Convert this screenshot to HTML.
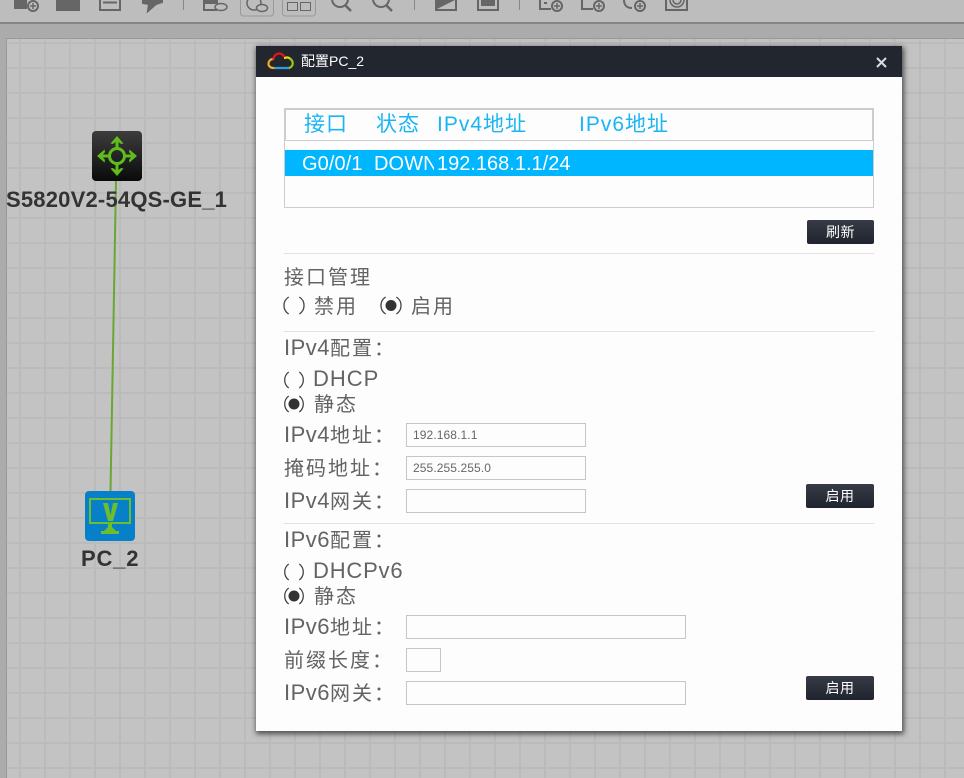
<!DOCTYPE html>
<html><head><meta charset="utf-8">
<style>
html,body{margin:0;padding:0}
body{width:964px;height:778px;overflow:hidden;position:relative;background:#ababab;font-family:"Liberation Sans","Noto Sans CJK SC",sans-serif}
.abs,.t{position:absolute}
.t{white-space:nowrap;color:#636363;font-size:20px;line-height:24px;letter-spacing:2px}
.t b{font-weight:normal;font-size:22px;letter-spacing:.5px}
.hd{color:#1ab5f5;font-size:21px;letter-spacing:1px}
.inp{position:absolute;box-sizing:border-box;height:24px;border:1px solid #c6c6c6;background:#fdfdfd;font-size:12px;color:#666;line-height:22px;padding-left:6px;letter-spacing:.1px}
.btn{position:absolute;width:67px;height:24px;border-radius:2px;background:linear-gradient(#363b47,#20242d);color:#fff;font-size:14px;line-height:24px;text-align:center;letter-spacing:.5px}
.hr{position:absolute;left:284px;width:590px;height:1px;background:#e2e2e2}
</style></head><body>
<div class="abs" style="left:0;top:0;width:964px;height:22px;background:#bdbdbd;border-bottom:2px solid #868686"></div>
<svg class="abs" style="left:6px;top:38px" width="958" height="740">
<defs><pattern id="g" width="25" height="25" patternUnits="userSpaceOnUse" x="13" y="4"><path d="M0 0h25v25h-25z" fill="#c3c3c3"/><path d="M0 0h25v2h-25z" fill="#bbb"/><path d="M0 0h2v25h-2z" fill="#bbb"/></pattern></defs>
<rect width="958" height="740" fill="url(#g)"/>
<rect x="0" y="0" width="958" height="1" fill="#999"/><rect x="0" y="0" width="1" height="740" fill="#999"/>
</svg>
<svg class="abs" style="left:0;top:0" width="964" height="24" fill="none" stroke="#666" stroke-width="2">
<path d="M14 0h13v9h-13z" fill="#666" stroke="none"/><circle cx="33" cy="6" r="5" fill="#bdbdbd"/><path d="M30 6h6M33 3v6" stroke-width="1.500"/>
<path d="M56 0h24v11h-24z" fill="#666" stroke="none"/>
<path d="M100 0v10h20v-10M103 2.500h14"/>
<path d="M143 0v3l6 1-1 7 8-7 6-2v-2z" fill="#666"/>
<path d="M183.500 0v10" stroke="#888" stroke-width="1"/>
<path d="M204 0v10h13"/><path d="M205 0h13v4h-13z" fill="#666" stroke="none"/><ellipse cx="221" cy="7" rx="6" ry="3.500" fill="#bdbdbd" stroke-width="1.500"/>
<rect x="240.500" y="-5" width="33" height="21" rx="3" stroke="#999" stroke-width="1"/><circle cx="254" cy="3" r="7" stroke-width="1.500"/><ellipse cx="262" cy="8" rx="5.500" ry="3.500" fill="#bdbdbd" stroke-width="1.500"/>
<rect x="282.500" y="-5" width="33" height="21" rx="3" stroke="#999" stroke-width="1"/><path d="M287.500 2.500h10v8h-10zM300.500 2.500h10v8h-10z" stroke-width="1"/>
<circle cx="340" cy="-1" r="8"/><path d="M345 5l6 6" stroke-width="2.500"/>
<circle cx="381" cy="-1" r="8"/><path d="M386 5l6 6" stroke-width="2.500"/>
<path d="M414.500 0v10" stroke="#888" stroke-width="1"/>
<path d="M436 0v10h20v-10"/><path d="M437 0h18l-18 9z" fill="#666" stroke="none"/>
<path d="M478 0v10h20v-10"/><path d="M481 0h14v6h-14z" fill="#666" stroke="none"/>
<path d="M519.500 0v10" stroke="#888" stroke-width="1"/>
<path d="M540 0v9h11M544 3h3"/><circle cx="557" cy="6" r="5" fill="#bdbdbd"/><path d="M554 6h6M557 3v6" stroke-width="1.500"/>
<path d="M582 0v9h11"/><circle cx="599" cy="6" r="5" fill="#bdbdbd"/><path d="M596 6h6M599 3v6" stroke-width="1.500"/>
<path d="M624 0c0 5 3 8 8 8"/><circle cx="640" cy="6" r="5" fill="#bdbdbd"/><path d="M637 6h6M640 3v6" stroke-width="1.500"/>
<path d="M666 0v10h21v-10"/><path d="M670 0a7 7 0 0 0 14 0M673 0a4 4 0 0 0 8 0" stroke-width="1.500"/>
</svg>
<svg class="abs" style="left:0;top:0" width="256" height="778" fill="none">
<path d="M116 180L110.500 492" stroke="#6aa632" stroke-width="2"/>
<defs><linearGradient id="b" x1="0" y1="0" x2="0" y2="1"><stop offset="0" stop-color="#3d3d3d"/><stop offset="1" stop-color="#0a0a0a"/></linearGradient>
<path id="ar" d="M117 136l6.500 7.500-2.500.5-2.500-2v7h-3v-7l-2.500 2-2.500-.5z" fill="#5fbd1c"/></defs>
<rect x="92" y="131" width="50" height="50" rx="4" fill="url(#b)"/>
<circle cx="117" cy="156" r="7.500" stroke="#5fbd1c" stroke-width="3"/>
<use href="#ar"/><use href="#ar" transform="rotate(90 117 156)"/><use href="#ar" transform="rotate(180 117 156)"/><use href="#ar" transform="rotate(270 117 156)"/>
<rect x="85" y="491" width="50" height="50" rx="4" fill="#0681c9"/>
<rect x="90" y="499" width="40" height="24" stroke="#6dbd2c" stroke-width="2"/>
<path d="M103 503h5l2.500 12 2.500-12h5l-5 18h-5z" fill="#6dbd2c"/>
<path d="M108 524h4v3h-4zM104 531l4-4h4l4 4zM101 531h18v3h-18z" fill="#6dbd2c"/>
</svg>
<div class="t" style="left:6px;top:187px;font-size:22px;line-height:26px;font-weight:bold;color:#333;letter-spacing:.2px">S5820V2-54QS-GE_1</div>
<div class="t" style="left:81px;top:546px;font-size:22px;line-height:26px;font-weight:bold;color:#333;letter-spacing:.8px">PC_2</div>

<div class="abs" style="left:256px;top:46px;width:646px;height:685px;background:#fdfdfd;box-shadow:1px 2px 5px 1px rgba(40,40,40,.75)"></div>
<div class="abs" style="left:256px;top:46px;width:646px;height:31px;background:#22262f"></div>
<svg class="abs" style="left:266px;top:51px" width="30" height="20" fill="none" stroke-width="2.200" stroke-linecap="round">
<path d="M2.500 13c0-3 2-5 5-5" stroke="#eeb01c"/><path d="M7.500 8c0-3 3-5.500 5.500-5.500 3 0 5 2 6 4.500" stroke="#e8141c"/><path d="M19 7c2-1 4-.5 5.500 1" stroke="#f4e000"/><path d="M24.500 8c2.500 2 3 5 1 7.500-1 1-2 1.500-3 1.500" stroke="#9bc41c"/><path d="M9 17h13" stroke="#2c9fdc"/><path d="M2.500 13c0 2.500 2.500 4 5 4" stroke="#eeb01c"/></svg>
<div class="t" style="left:301px;top:51px;font-size:14px;line-height:20px;color:#fff;letter-spacing:0">配置PC_2</div>
<svg class="abs" style="left:875px;top:56px" width="13" height="13"><path d="M2 2l9 9M11 2l-9 9" stroke="#dcdcdc" stroke-width="2"/></svg>

<div class="abs" style="left:284px;top:108px;width:590px;height:100px;box-sizing:border-box;border:1px solid #ccc;background:#fdfdfd"></div>
<div class="abs" style="left:284px;top:108px;width:590px;height:33px;box-sizing:border-box;border:2px solid #ccc;border-bottom:1px solid #ccc"></div>
<div class="abs" style="left:285px;top:150px;width:588px;height:26px;background:#00b6ff"></div>
<div class="t hd" style="left:304px;top:113px">接口</div>
<div class="t hd" style="left:376px;top:113px">状态</div>
<div class="t hd" style="left:437px;top:113px">IPv4地址</div>
<div class="t hd" style="left:579px;top:113px">IPv6地址</div>
<div class="t" style="left:302px;top:152px;color:#fff;letter-spacing:.1px">G0/0/1</div>
<div class="t" style="left:374px;top:152px;color:#fff;letter-spacing:.1px;width:60px;overflow:hidden">DOWN</div>
<div class="t" style="left:437px;top:152px;color:#fff;letter-spacing:0">192.168.1.1/24</div>
<div class="btn" style="left:807px;top:220px">刷新</div>
<div class="hr" style="top:253px"></div>

<svg class="abs" style="left:0;top:0;pointer-events:none" width="964" height="778" fill="none" stroke="#444" stroke-width="1.300">
<path d="M288.700 297A10 10 0 0 0 288.700 314M299.300 297A10 10 0 0 1 299.300 314"/>
<path d="M385.700 297A10 10 0 0 0 385.700 314M396.300 297A10 10 0 0 1 396.300 314"/><circle cx="391" cy="305.500" r="5.500" fill="#333" stroke="none"/>
<path d="M288.700 372A10 10 0 0 0 288.700 388M299.300 372A10 10 0 0 1 299.300 388"/>
<path d="M288.700 396A10 10 0 0 0 288.700 412M299.300 396A10 10 0 0 1 299.300 412"/><circle cx="294" cy="404" r="5.500" fill="#333" stroke="none"/>
<path d="M288.700 564A10 10 0 0 0 288.700 580M299.300 564A10 10 0 0 1 299.300 580"/>
<path d="M288.700 588A10 10 0 0 0 288.700 604M299.300 588A10 10 0 0 1 299.300 604"/><circle cx="294" cy="596" r="5.500" fill="#333" stroke="none"/>
</svg>

<div class="t" style="left:284px;top:266px">接口管理</div>
<div class="t" style="left:314px;top:295px">禁用</div>
<div class="t" style="left:411px;top:295px">启用</div>
<div class="hr" style="top:331px"></div>

<div class="t" style="left:284px;top:336px"><b>IPv4</b>配置：</div>
<div class="t" style="left:313px;top:367px;font-size:22px;letter-spacing:1px">DHCP</div>
<div class="t" style="left:314px;top:393px">静态</div>
<div class="t" style="left:284px;top:423px"><b>IPv4</b>地址：</div>
<div class="inp" style="left:406px;top:423px;width:180px">192.168.1.1</div>
<div class="t" style="left:284px;top:457px">掩码地址：</div>
<div class="inp" style="left:406px;top:456px;width:180px">255.255.255.0</div>
<div class="t" style="left:284px;top:489px"><b>IPv4</b>网关：</div>
<div class="inp" style="left:406px;top:489px;width:180px"></div>
<div class="btn" style="left:806px;top:484px;width:68px">启用</div>
<div class="hr" style="top:523px"></div>

<div class="t" style="left:284px;top:528px"><b>IPv6</b>配置：</div>
<div class="t" style="left:313px;top:559px;font-size:22px;letter-spacing:.8px">DHCPv6</div>
<div class="t" style="left:314px;top:585px">静态</div>
<div class="t" style="left:284px;top:615px"><b>IPv6</b>地址：</div>
<div class="inp" style="left:406px;top:615px;width:280px"></div>
<div class="t" style="left:284px;top:649px">前缀长度：</div>
<div class="inp" style="left:406px;top:648px;width:35px"></div>
<div class="t" style="left:284px;top:681px"><b>IPv6</b>网关：</div>
<div class="inp" style="left:406px;top:681px;width:280px"></div>
<div class="btn" style="left:806px;top:676px;width:68px">启用</div>
</body></html>
